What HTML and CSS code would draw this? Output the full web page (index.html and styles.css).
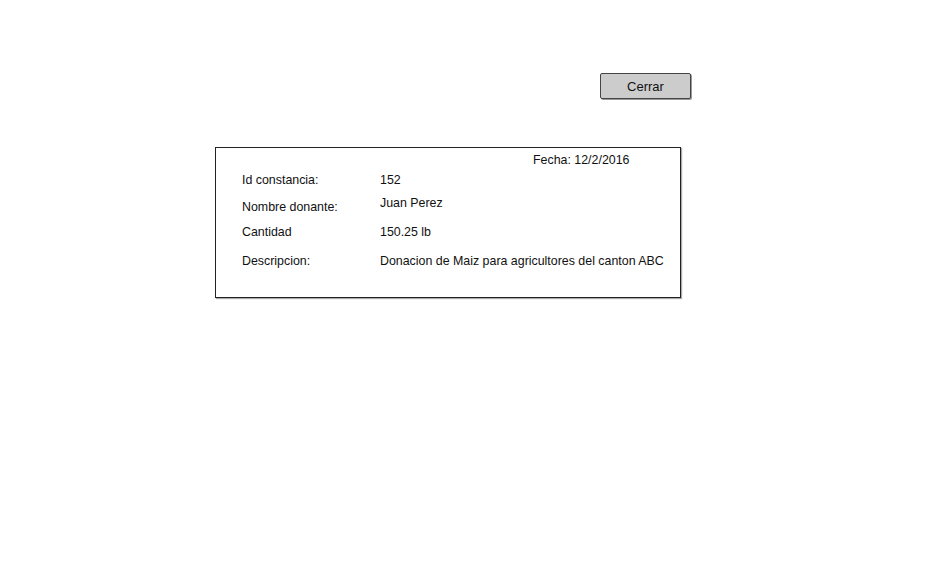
FILE: index.html
```html
<!DOCTYPE html>
<html lang="es">
<head>
<meta charset="utf-8">
<title>Constancia</title>
<link rel="stylesheet" href="styles.css">
</head>
<body>
<div class="page">
  <div class="toolbar">
    <button class="btn">Cerrar</button>
  </div>
  <div class="card">
    <div class="fecha">Fecha: 12/2/2016</div>
    <div class="row r1"><span class="label">Id constancia:</span><span class="value">152</span></div>
    <div class="row r2"><span class="label l2">Nombre donante:</span><span class="value v2">Juan Perez</span></div>
    <div class="row r3"><span class="label">Cantidad</span><span class="value">150.25 lb</span></div>
    <div class="row r4"><span class="label">Descripcion:</span><span class="value">Donacion de Maiz para agricultores del canton ABC</span></div>
  </div>
</div>
</body>
</html>
```

FILE: styles.css
```css
html, body {
  margin: 0;
  padding: 0;
  background: #fff;
}
body {
  font-family: "Comic Sans MS", "Liberation Sans", sans-serif;
  font-size: 13px;
  line-height: 15px;
  color: #111;
}
.page {
  width: 949px;
  height: 575px;
  overflow: hidden;
}
.toolbar {
  display: flex;
  padding-top: 73px;
  padding-left: 600px;
}
.btn {
  width: 91px;
  height: 26px;
  box-sizing: border-box;
  background: #cccccc;
  border: 1.5px solid #444;
  border-radius: 2px;
  font: inherit;
  color: #111;
  padding: 0;
  margin: 0;
  box-shadow: 1px 1px 0 #999;
}
.card {
  margin-top: 48px;
  margin-left: 215px;
  width: 466px;
  height: 151px;
  box-sizing: border-box;
  border: 1px solid #222;
  box-shadow: 1px 1px 1px #aaa;
  padding: 5px 0 0 26px;
  font-size: 12.4px;
}
.fecha {
  margin-left: 291px;
  height: 15px;
}
.row {
  display: flex;
  height: 15px;
}
.label {
  width: 138px;
  flex: none;
}
.r1 { margin-top: 5px; }
.r2 { margin-top: 12px; }
.r3 { margin-top: 10px; }
.r4 { margin-top: 14px; }
.l2 { margin-top: 0; }
.v2 { margin-top: -4px; }
```
